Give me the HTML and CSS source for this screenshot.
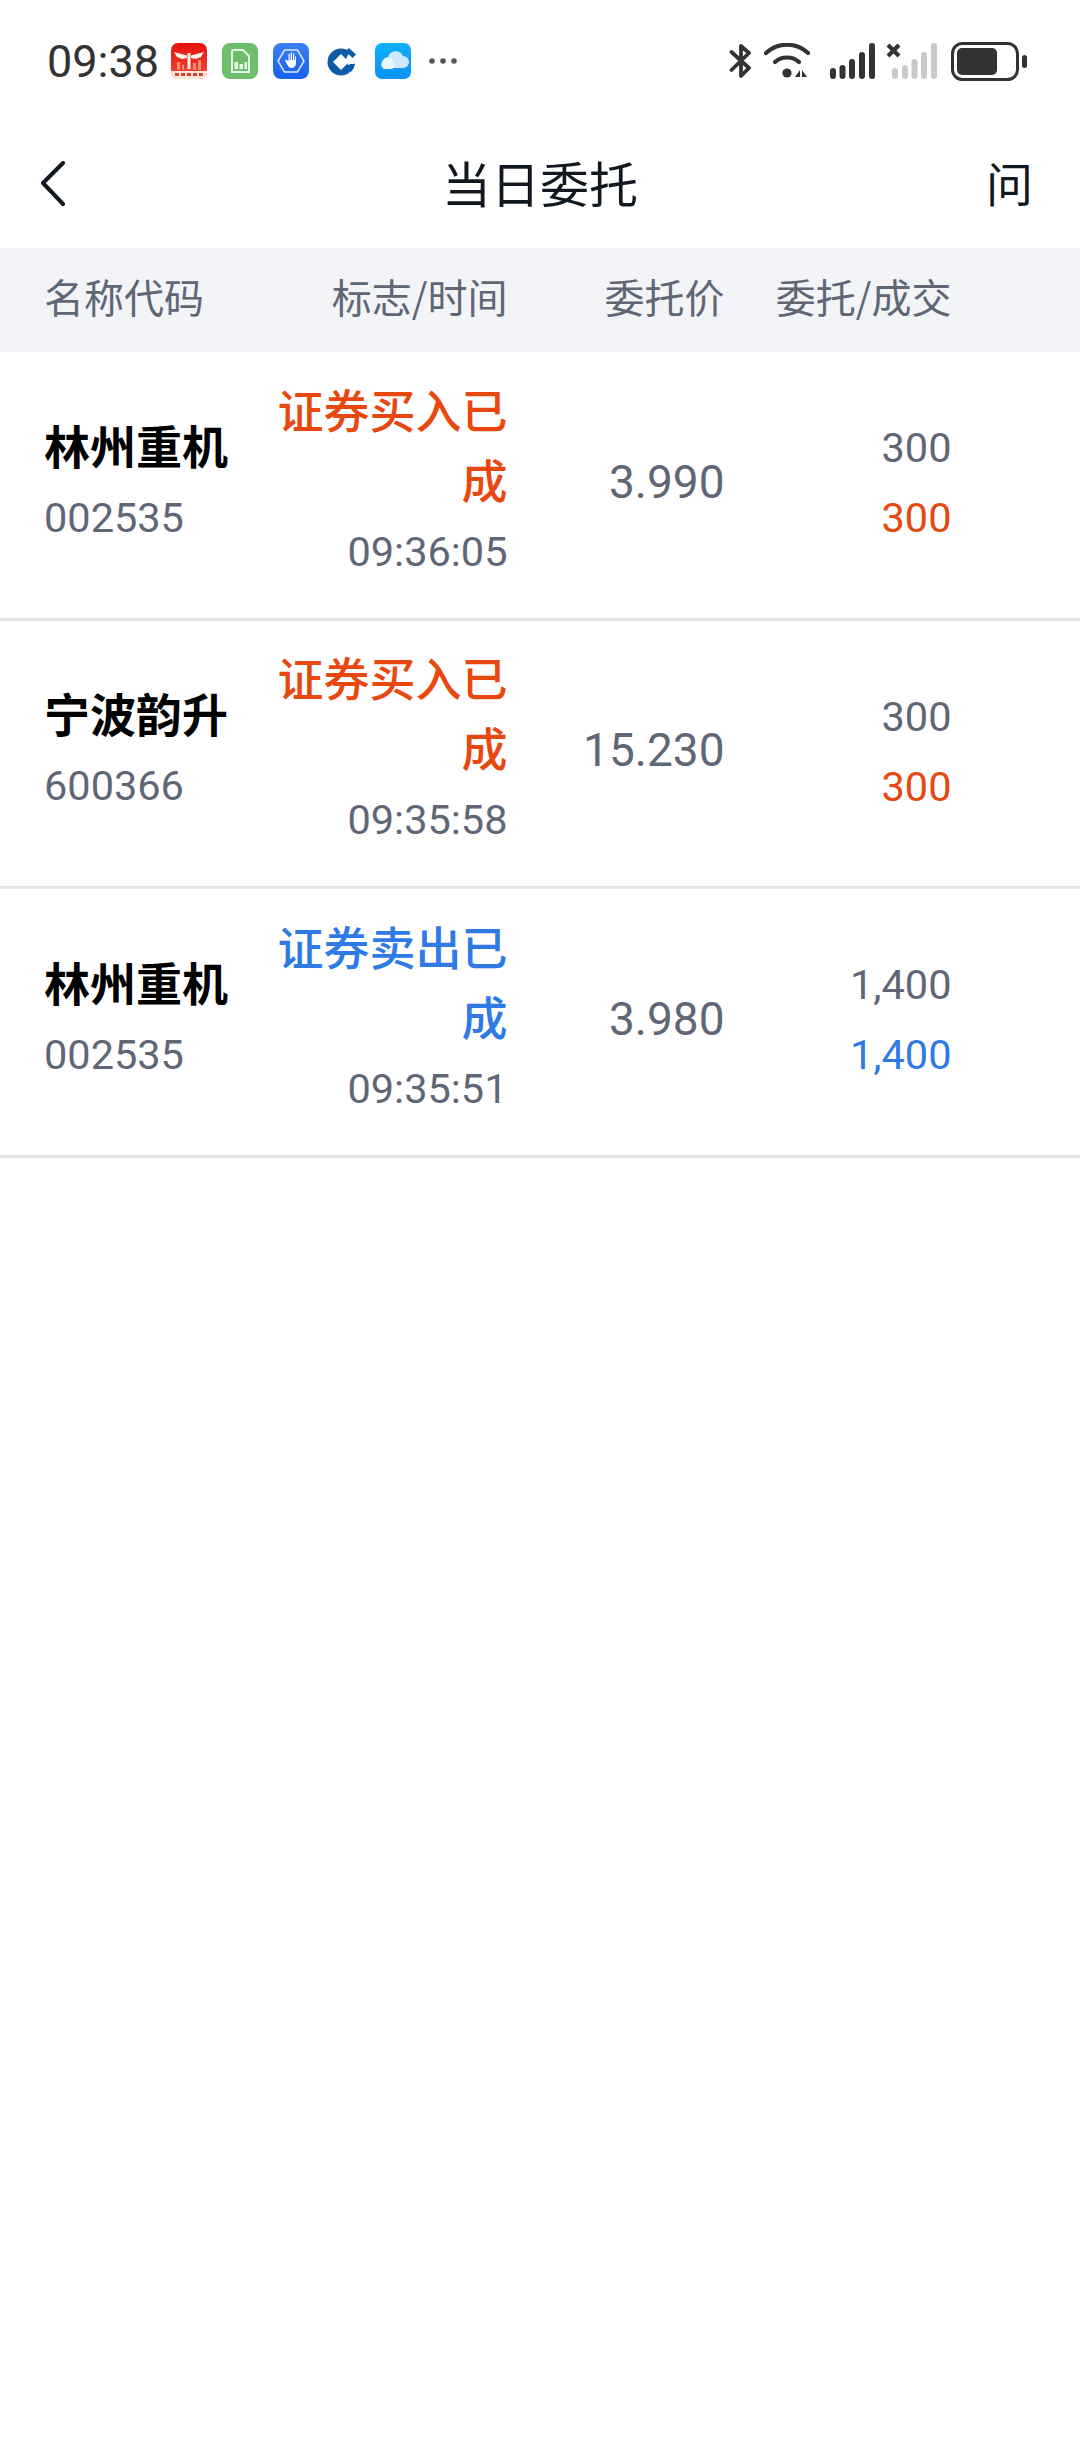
FILE: index.html
```html
<!DOCTYPE html>
<html lang="zh-CN">
<head>
<meta charset="utf-8">
<title>当日委托</title>
<link rel="stylesheet" href="styles.css">
</head>
<body>
<div class="status">
  <div class="status-left">
    <span class="clock">09:38</span>
    <svg class="app" viewBox="0 0 36 36"><defs><linearGradient id="r" x1="0" y1="0" x2="0" y2="1"><stop offset="0" stop-color="#e8100c"/><stop offset="1" stop-color="#e8503a"/></linearGradient></defs><rect width="36" height="36" rx="7" fill="url(#r)"/><path d="M3 9l13 3.500v2.500l-5 1-5-2zM33 9l-13 3.500v2.500l5 1 5-2z" fill="#fff1e8"/><rect x="16.500" y="10" width="3" height="16" fill="#fff1e8"/><path d="M6 19h3v8H6zM11 22h2v5h-2zM22 20h3v7h-3zM27 17h3v10h-3z" fill="#f58a70"/><path d="M0 28h36v1a7 7 0 0 1-7 7H7a7 7 0 0 1-7-7z" fill="#fde6d8"/><path d="M4 30h4v3H4zM10 30h4v3h-4zM16 30h4v3h-4zM22 30h4v3h-4zM28 30h4v3h-4z" fill="#d9442c"/></svg>
    <svg class="app" viewBox="0 0 36 36"><rect width="36" height="36" rx="8" fill="#6dbf6b"/><path d="M12 7h9l6 6v16H10V9a2 2 0 0 1 2-2z" fill="none" stroke="#e8f6e6" stroke-width="2"/><path d="M12.500 19h3.500v7h-3.500zM17.500 21h3.500v5h-3.500zM22.500 19h2.500v7h-2.500z" fill="#e8f6e6"/></svg>
    <svg class="app" viewBox="0 0 36 36"><defs><linearGradient id="b" x1="0" y1="0" x2="0" y2="1"><stop offset="0" stop-color="#3b80f5"/><stop offset="1" stop-color="#1560ee"/></linearGradient></defs><rect width="36" height="36" rx="8" fill="url(#b)"/><path d="M5 18l6.500-11h13L31 18l-6.500 11h-13z" fill="none" stroke="#dbe8ff" stroke-width="1.500"/><path d="M12 17.500l1-1 2.500 2V11h1.200v6h1V9.500h1.300V17h1v-6.500h1.300V17h.8v-3.500H23V20c0 3.500-2.200 5-4.500 5-3 0-4-3-6.500-7.500z" fill="#fff"/></svg>
    <svg class="app" viewBox="0 0 36 36"><circle cx="17" cy="19" r="13.500" fill="#0c5ca8"/><path d="M17 11l8 8-8 8-8-8z" fill="#fff"/><path d="M22 16l4-8 6 6-2 8-6 0z" fill="#fff"/><path d="M21.500 8.500l3.500-3.500 7 6.500-3.500 3.500z" fill="#0c5ca8"/><path d="M26 21h5a13.500 13.500 0 0 1-4 8l-5-5z" fill="#0c5ca8"/></svg>
    <svg class="app" viewBox="0 0 36 36"><defs><linearGradient id="c" x1="0" y1="0" x2="0" y2="1"><stop offset="0" stop-color="#12b0fb"/><stop offset="1" stop-color="#0a92f7"/></linearGradient></defs><rect width="36" height="36" rx="7" fill="url(#c)"/><path d="M13 25a5 5 0 0 1 0-11 8 8 0 0 1 15-1 6 6 0 0 1 0 12z" fill="#cfeafd"/><path d="M9 26a5 5 0 0 1 0-9 5 5 0 0 1 9 2 4 4 0 0 1-1 7z" fill="#e9f6fe"/></svg>
    <svg class="dots" viewBox="0 0 30 8"><circle cx="4" cy="4" r="2.800" fill="#555"/><circle cx="15" cy="4" r="2.800" fill="#555"/><circle cx="26" cy="4" r="2.800" fill="#555"/></svg>
  </div>
  <div class="status-right">
    <svg class="si-bt" viewBox="0 0 23 36"><path d="M2.500 9L20 25l-8 8V3l8 7L2.500 27" fill="none" stroke="#333" stroke-width="3.800" stroke-linecap="round" stroke-linejoin="round"/></svg>
    <svg class="si-wifi" viewBox="0 0 46 36"><path d="M2 10C14-1 32-1 44 10" fill="none" stroke="#333" stroke-width="4.200" stroke-linecap="round"/><path d="M11 19C17 13 29 13 35 19" fill="none" stroke="#333" stroke-width="4.200" stroke-linecap="round"/><circle cx="23" cy="30" r="4.600" fill="#333"/><path d="M36 27v7h-5zM38 27v7h5z" fill="#333"/></svg>
    <svg class="si-sig" viewBox="0 0 45 36"><rect x="0" y="25" width="6" height="11" rx="3" fill="#333"/><rect x="9.500" y="22" width="6" height="14" rx="3" fill="#333"/><rect x="19" y="16" width="6" height="20" rx="3" fill="#333"/><rect x="29" y="9" width="6" height="27" rx="3" fill="#333"/><rect x="39" y="0" width="6" height="36" rx="3" fill="#333"/></svg>
    <svg class="si-sig2" viewBox="0 0 52 36"><path d="M3 2l11 11M14 2L3 13" stroke="#333" stroke-width="4.200"/><rect x="7" y="25" width="6" height="11" rx="3" fill="#c9c9c9"/><rect x="17" y="22" width="6" height="14" rx="3" fill="#c9c9c9"/><rect x="26.500" y="16" width="6" height="20" rx="3" fill="#c9c9c9"/><rect x="36" y="9" width="6" height="27" rx="3" fill="#c9c9c9"/><rect x="46" y="0" width="6" height="36" rx="3" fill="#c9c9c9"/></svg>
    <svg class="si-bat" viewBox="0 0 77 39"><rect x="1.500" y="1.500" width="65" height="36" rx="10" fill="none" stroke="#333" stroke-width="3"/><rect x="6" y="6" width="40" height="27" rx="5" fill="#333"/><rect x="71" y="13" width="5" height="13" rx="2.500" fill="#333"/></svg>
  </div>
</div>

<header class="nav">
  <svg class="back" viewBox="0 0 26 46"><path d="M23 2L3 22l20 21" fill="none" stroke="#111820" stroke-width="4" stroke-linecap="round" stroke-linejoin="round"/></svg>
  <h1 class="title">当日委托</h1>
  <span class="help">问</span>
</header>

<div class="grid head">
  <span>名称代码</span>
  <span class="right">标志/时间</span>
  <span class="right">委托价</span>
  <span class="right">委托/成交</span>
</div>

<div class="grid row">
  <div><div class="name">林州重机</div><div class="sub">002535</div></div>
  <div class="right"><div class="flag buy">证券买入已成</div><div class="sub time">09:36:05</div></div>
  <div class="right price">3.990</div>
  <div class="right vol"><div class="sub">300</div><div class="sub buy">300</div></div>
</div>
<div class="grid row">
  <div><div class="name">宁波韵升</div><div class="sub">600366</div></div>
  <div class="right"><div class="flag buy">证券买入已成</div><div class="sub time">09:35:58</div></div>
  <div class="right price">15.230</div>
  <div class="right vol"><div class="sub">300</div><div class="sub buy">300</div></div>
</div>
<div class="grid row">
  <div><div class="name">林州重机</div><div class="sub">002535</div></div>
  <div class="right"><div class="flag sell">证券卖出已成</div><div class="sub time">09:35:51</div></div>
  <div class="right price">3.980</div>
  <div class="right vol"><div class="sub">1,400</div><div class="sub sell">1,400</div></div>
</div>
</body>
</html>
```

FILE: styles.css
```css
* { box-sizing: border-box; }
html, body { margin: 0; padding: 0; background: #fff; }
body { font-family: Roboto, "Noto Sans CJK SC", sans-serif; width: 1080px; height: 2440px; overflow: hidden; }

.status { height: 122px; padding: 0 52px 0 47px; display: flex; justify-content: space-between; align-items: center; }
.status-left { display: flex; align-items: center; }
.status-right { display: flex; align-items: center; }
.clock { font-family: Roboto, sans-serif; font-size: 45px; color: #333; width: 124px; line-height: 1; }
.app { width: 36px; height: 36px; margin-right: 15px; display: block; }
.dots { width: 30px; height: 8px; margin-left: 2px; display: block; }
.si-bt { width: 23px; height: 36px; margin-right: 12px; }
.si-wifi { width: 46px; height: 36px; margin-right: 20px; }
.si-sig { width: 45px; height: 36px; margin-right: 10px; }
.si-sig2 { width: 52px; height: 36px; margin-right: 14px; }
.si-bat { width: 77px; height: 39px; }

.nav { height: 126px; padding: 0 47px 8px 40px; display: flex; align-items: center; justify-content: space-between; position: relative; }
.back { width: 26px; height: 46px; display: block; margin-top: 6px; }
.title { position: absolute; left: 0; right: 0; margin: 0; text-align: center; font-size: 49px; font-weight: 400; color: #111820; font-family: "Noto Sans CJK SC", sans-serif; line-height: 1; }
.help { font-size: 47px; color: #111820; font-family: "Noto Sans CJK SC", sans-serif; line-height: 1; }

.grid { display: grid; grid-template-columns: 200px 263.5px 217px 227px; padding-left: 44px; align-items: center; }
.right { text-align: right; }
.head { height: 104px; padding-bottom: 8px; background: #f2f4f8; color: #5f6777; font-size: 40px; font-family: "Noto Sans CJK SC", sans-serif; }
.row { height: 268.5px; padding-bottom: 6px; border-bottom: 3px solid #e3e5e9; }
.name { font-size: 46px; font-weight: 700; color: #000; line-height: 66px; margin-bottom: 6px; font-family: "Noto Sans CJK SC", sans-serif; white-space: nowrap; }
.sub { font-size: 41.5px; color: #5f6777; line-height: 70px; font-family: Roboto, sans-serif; }
.time { line-height: 78px; }
.vol { padding-top: 3px; }
.flag { font-size: 46px; line-height: 70px; font-weight: 500; font-family: "Noto Sans CJK SC", sans-serif; }
.price { font-size: 46px; color: #5f6777; }
.buy { color: #e8470f; }
.sell { color: #2f7ae5; }
```
